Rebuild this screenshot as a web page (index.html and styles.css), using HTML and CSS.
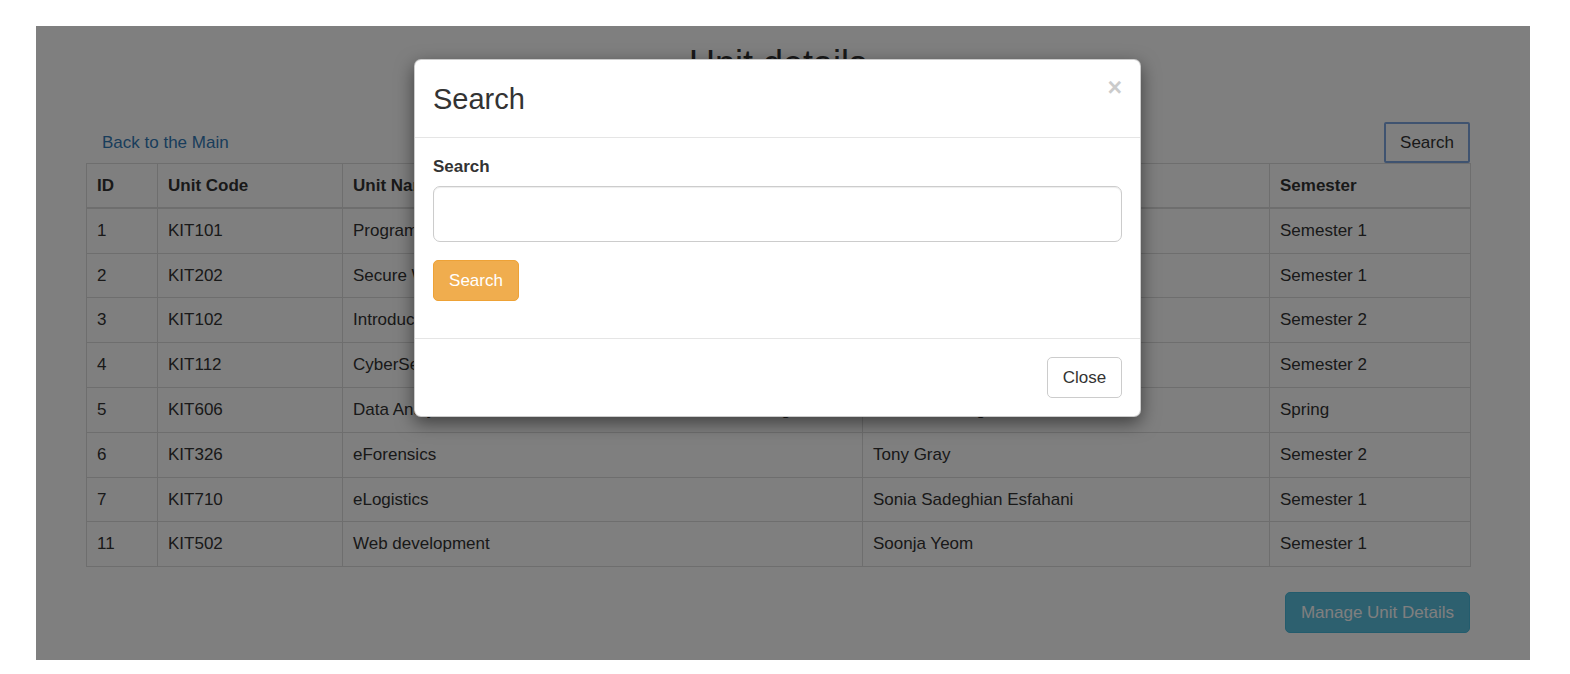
FILE: index.html
```html
<!DOCTYPE html>
<html>
<head>
<meta charset="utf-8">
<link rel="stylesheet" href="styles.css">
</head>
<body>
<div class="frame">
  <div class="page">
    <h2 class="page-title">Unit details</h2>
    <div class="toolbar">
      <a class="btn btn-link" href="#">Back to the Main</a>
      <button class="btn btn-default btn-focus">Search</button>
    </div>
    <table class="table">
      <colgroup>
        <col class="c-id"><col class="c-code"><col class="c-name"><col class="c-coord"><col class="c-sem">
      </colgroup>
      <thead>
        <tr><th>ID</th><th>Unit Code</th><th>Unit Name</th><th>Unit Coordinator</th><th>Semester</th></tr>
      </thead>
      <tbody>
        <tr><td>1</td><td>KIT101</td><td>Programming</td><td>Julian Dermoudy</td><td>Semester 1</td></tr>
        <tr><td>2</td><td>KIT202</td><td>Secure W</td><td>Soonja Yeom</td><td>Semester 1</td></tr>
        <tr><td>3</td><td>KIT102</td><td>Introduction</td><td>Dean Steer</td><td>Semester 2</td></tr>
        <tr><td>4</td><td>KIT112</td><td>CyberSecurity</td><td>Joel Scanlan</td><td>Semester 2</td></tr>
        <tr><td>5</td><td>KIT606</td><td>Data Analytics and Advanced Statistical Machine Learning</td><td>Andrew Huang</td><td>Spring</td></tr>
        <tr><td>6</td><td>KIT326</td><td>eForensics</td><td>Tony Gray</td><td>Semester 2</td></tr>
        <tr><td>7</td><td>KIT710</td><td>eLogistics</td><td>Sonia Sadeghian Esfahani</td><td>Semester 1</td></tr>
        <tr><td>11</td><td>KIT502</td><td>Web development</td><td>Soonja Yeom</td><td>Semester 1</td></tr>
      </tbody>
    </table>
    <div class="footer-row">
      <button class="btn btn-info">Manage Unit Details</button>
    </div>
  </div>
  <div class="backdrop"></div>
  <div class="modal">
    <div class="modal-header">
      <h3 class="modal-title">Search</h3>
      <button class="close">&times;</button>
    </div>
    <div class="modal-body">
      <div class="form-group">
        <label class="label">Search</label>
        <input class="input" type="text">
      </div>
      <button class="btn btn-warning">Search</button>
    </div>
    <div class="modal-footer">
      <button class="btn btn-default">Close</button>
    </div>
  </div>
</div>
</body>
</html>
```

FILE: styles.css
```css
* { box-sizing: border-box; }
html, body { margin: 0; padding: 0; background: #fff; }
body {
  font-family: "Liberation Sans", Arial, sans-serif;
  font-size: 17px;
  color: #333;
}
.frame {
  position: relative;
  margin: 26px 0 0 36px;
  width: 1494px;
  height: 634px;
  overflow: hidden;
  background: #fff;
}
.page {
  padding: 0 60px 0 50px;
}
.page-title {
  margin: 0;
  padding-top: 18px;
  height: 96px;
  font-size: 36px;
  font-weight: 500;
  line-height: 40px;
  text-align: center;
  color: #333;
}
.toolbar {
  display: flex;
  justify-content: space-between;
  align-items: flex-end;
  height: 41px;
}
.btn {
  display: inline-flex;
  align-items: center;
  justify-content: center;
  height: 41px;
  padding: 0 15px;
  font-family: "Liberation Sans", Arial, sans-serif;
  font-size: 17px;
  white-space: nowrap;
  border: 1px solid transparent;
  border-radius: 5px;
  background: none;
  text-decoration: none;
  cursor: pointer;
}
.btn-link {
  color: #337ab7;
  padding: 0 15px;
}
.btn-default {
  background: #fff;
  border-color: #ccc;
  color: #333;
}
.btn-focus {
  border: 2px solid #7fa6e0;
  border-radius: 2px;
  width: 86px;
}
.btn-info {
  background: #5bc0de;
  border-color: #46b8da;
  color: #fff;
  padding: 0 15px;
}
.btn-warning {
  background: #f0ad4e;
  border-color: #eea236;
  color: #fff;
  height: 41px;
  width: 86px;
}
.table {
  width: 1384px;
  border-collapse: collapse;
  table-layout: fixed;
}
.c-id { width: 71px; }
.c-code { width: 185px; }
.c-name { width: 520px; }
.c-coord { width: 407px; }
.c-sem { width: 201px; }
.table th, .table td {
  border: 1px solid #ddd;
  padding: 10px 10px 9px;
  line-height: 24.8px;
  text-align: left;
  vertical-align: top;
  white-space: nowrap;
  overflow: hidden;
}
.table th {
  font-weight: bold;
  border-bottom: 2px solid #ddd;
  padding-bottom: 8px;
}
.footer-row {
  display: flex;
  justify-content: flex-end;
  width: 1384px;
  margin-top: 25px;
}
.backdrop {
  position: absolute;
  inset: 0;
  background: rgba(0, 0, 0, 0.5);
}
.modal {
  position: absolute;
  left: 378px;
  top: 33px;
  width: 727px;
  background: #fff;
  border: 1px solid rgba(0, 0, 0, 0.2);
  border-radius: 7px;
  box-shadow: 0 6px 18px rgba(0, 0, 0, 0.5);
}
.modal-header {
  position: relative;
  display: flex;
  align-items: center;
  height: 78px;
  padding: 0 18px;
  border-bottom: 1px solid #e5e5e5;
}
.modal-title {
  margin: 0;
  font-size: 29px;
  font-weight: 500;
  line-height: 32px;
  color: #333;
}
.close {
  position: absolute;
  right: 18px;
  top: 13px;
  padding: 0;
  border: 0;
  background: none;
  font-family: "Liberation Sans", Arial, sans-serif;
  font-size: 25px;
  font-weight: bold;
  line-height: 28px;
  color: #000;
  opacity: 0.2;
}
.modal-body {
  padding: 17px 18px 37px;
}
.form-group {
  display: flex;
  flex-direction: column;
  margin-bottom: 18px;
}
.label {
  font-weight: bold;
  line-height: 24px;
  margin-bottom: 7px;
}
.input {
  height: 56px;
  width: 100%;
  border: 1px solid #ccc;
  border-radius: 7px;
  box-shadow: inset 0 1px 1px rgba(0, 0, 0, 0.075);
  font-size: 20px;
  padding: 0 18px;
}
.modal-footer {
  display: flex;
  justify-content: flex-end;
  padding: 18px;
  border-top: 1px solid #e5e5e5;
}
.modal-footer .btn {
  height: 41px;
  width: 75px;
  border-radius: 5px;
}
```
